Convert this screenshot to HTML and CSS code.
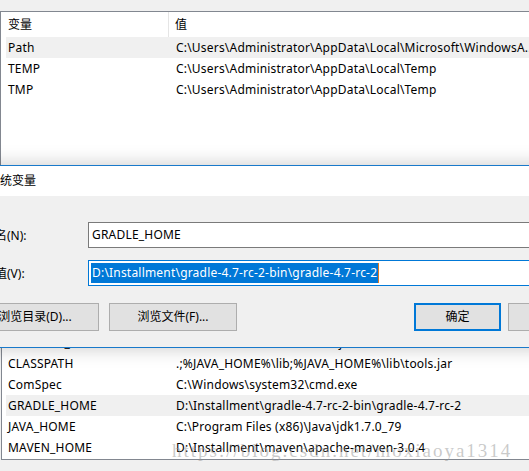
FILE: index.html
```html
<!DOCTYPE html>
<html lang="zh-CN">
<head>
<meta charset="utf-8">
<title>系统变量</title>
<link rel="stylesheet" href="styles.css">
</head>
<body>
<div class="screen">
  <div class="top">
    <div class="list list-top">
      <div class="row head"><div class="c1">变量</div><div class="c2">值</div></div>
      <div class="row alt"><div class="c1">Path</div><div class="c2">C:\Users\Administrator\AppData\Local\Microsoft\WindowsA...</div></div>
      <div class="row"><div class="c1">TEMP</div><div class="c2">C:\Users\Administrator\AppData\Local\Temp</div></div>
      <div class="row"><div class="c1">TMP</div><div class="c2">C:\Users\Administrator\AppData\Local\Temp</div></div>
    </div>
  </div>

  <div class="dialog">
    <div class="title">系统变量</div>
    <div class="body">
      <div class="field">
        <div class="label">变量名(N):</div>
        <div class="input">GRADLE_HOME</div>
      </div>
      <div class="field">
        <div class="label">变量值(V):</div>
        <div class="input focus"><span class="selected">D:\Installment\gradle-4.7-rc-2-bin\gradle-4.7-rc-2</span><span class="caret"></span></div>
      </div>
      <div class="buttons">
        <div class="btn wide">浏览目录(D)...</div>
        <div class="btn wide">浏览文件(F)...</div>
        <div class="btn primary">确定</div>
        <div class="btn">取消</div>
      </div>
    </div>
  </div>

  <div class="bottom">
    <div class="list list-bottom">
      <div class="row hidden-row"><div class="c1">ANDROID_HOME</div><div class="c2">D:\Installment\android\sdk\jdk</div></div>
      <div class="row"><div class="c1">CLASSPATH</div><div class="c2">.;%JAVA_HOME%\lib;%JAVA_HOME%\lib\tools.jar</div></div>
      <div class="row"><div class="c1">ComSpec</div><div class="c2">C:\Windows\system32\cmd.exe</div></div>
      <div class="row alt"><div class="c1">GRADLE_HOME</div><div class="c2">D:\Installment\gradle-4.7-rc-2-bin\gradle-4.7-rc-2</div></div>
      <div class="row"><div class="c1">JAVA_HOME</div><div class="c2">C:\Program Files (x86)\Java\jdk1.7.0_79</div></div>
      <div class="row"><div class="c1">MAVEN_HOME</div><div class="c2">D:\Installment\maven\apache-maven-3.0.4</div></div>
    </div>
    <div class="watermark">https://blog.csdn.net/moxiaoya1314</div>
  </div>
</div>
</body>
</html>
```

FILE: styles.css
```css
html, body {
  margin: 0;
  padding: 0;
  overflow: hidden;
}
body {
  width: 529px;
  height: 471px;
  background: #f0f0f0;
  font-family: "Noto Sans", "Noto Sans CJK SC", sans-serif;
  font-size: 12px;
  color: #000;
}
.screen {
  width: 529px;
  height: 471px;
  overflow: hidden;
}

/* top list */
.top {
  height: 165px;
  padding-top: 11px;
  box-sizing: border-box;
}
.list {
  background: #fff;
  overflow: hidden;
  box-sizing: border-box;
}
.list-top {
  height: 154px;
  border-top: 1px solid #828790;
  border-left: 1px solid #828790;
}
.row {
  display: grid;
  grid-template-columns: 168px 1fr;
  height: 21px;
  line-height: 21px;
  margin-left: 5px;
  white-space: nowrap;
  letter-spacing: 0.2px;
}
.row .c1 { padding-left: 2px; overflow: hidden; }
.row .c2 { padding-left: 2px; overflow: hidden; }
.row.alt { background: #f0f0f0; }
.row.head {
  height: 25px;
  line-height: 25px;
  grid-template-columns: 163px 1fr;
  letter-spacing: 0;
}
.row.head .c1 {
  border-right: 1px solid #e5e5e5;
}
.row.head .c2 {
  padding-left: 6px;
}

/* dialog */
.dialog {
  position: relative;
  z-index: 2;
  width: 650px;
  margin-left: -40px;
  border-top: 1px solid #1979ca;
  border-bottom: 1px solid #1979ca;
  box-shadow: 0 0 18px rgba(0, 0, 0, 0.22);
}
.title {
  height: 30px;
  line-height: 30px;
  background: #fff;
  padding-left: 28px;
}
.body {
  background: #f0f0f0;
  height: 151px;
  box-sizing: border-box;
  padding: 26px 15px 0 11px;
}
.field {
  display: flex;
  align-items: center;
  height: 26px;
  margin-bottom: 12px;
}
.field + .field {
  margin-bottom: 17px;
}
.label {
  width: 117px;
  flex: none;
}
.input {
  flex: 1;
  height: 26px;
  box-sizing: border-box;
  border: 1px solid #7a7a7a;
  background: #fff;
  padding-left: 3px;
  line-height: 24px;
  white-space: nowrap;
  display: flex;
  align-items: center;
  letter-spacing: 0.2px;
}
.input.focus {
  border-color: #0078d7;
  padding-left: 2px;
}
.selected {
  background: #0078d7;
  color: #fff;
  height: 20px;
  line-height: 20px;
  padding: 0 1px;
}
.caret {
  width: 1px;
  height: 20px;
  background: #e07a1f;
}
.buttons {
  display: flex;
  gap: 10px;
}
.btn {
  height: 28px;
  line-height: 26px;
  box-sizing: border-box;
  border: 1px solid #adadad;
  background: #e1e1e1;
  text-align: center;
  width: 87px;
}
.btn.wide {
  width: 128px;
}
.btn.primary {
  margin-left: auto;
  border: 2px solid #0078d7;
  line-height: 24px;
}
.buttons .btn:last-child {
  margin-left: -3px;
}

/* bottom list */
.bottom {
  position: relative;
  height: 123px;
}
.list-bottom {
  height: 112px;
  margin-left: 1px;
  border-left: 1px solid #828790;
  border-bottom: 1px solid #828790;
}
.list-bottom .row {
  margin-left: 4px;
}
.hidden-row {
  margin-top: -16px;
}
.watermark {
  position: absolute;
  left: 172px;
  top: 93px;
  font-family: "Liberation Serif", serif;
  font-size: 19px;
  line-height: 19px;
  letter-spacing: 2px;
  color: rgba(150, 150, 150, 0.5);
  white-space: nowrap;
}
```
